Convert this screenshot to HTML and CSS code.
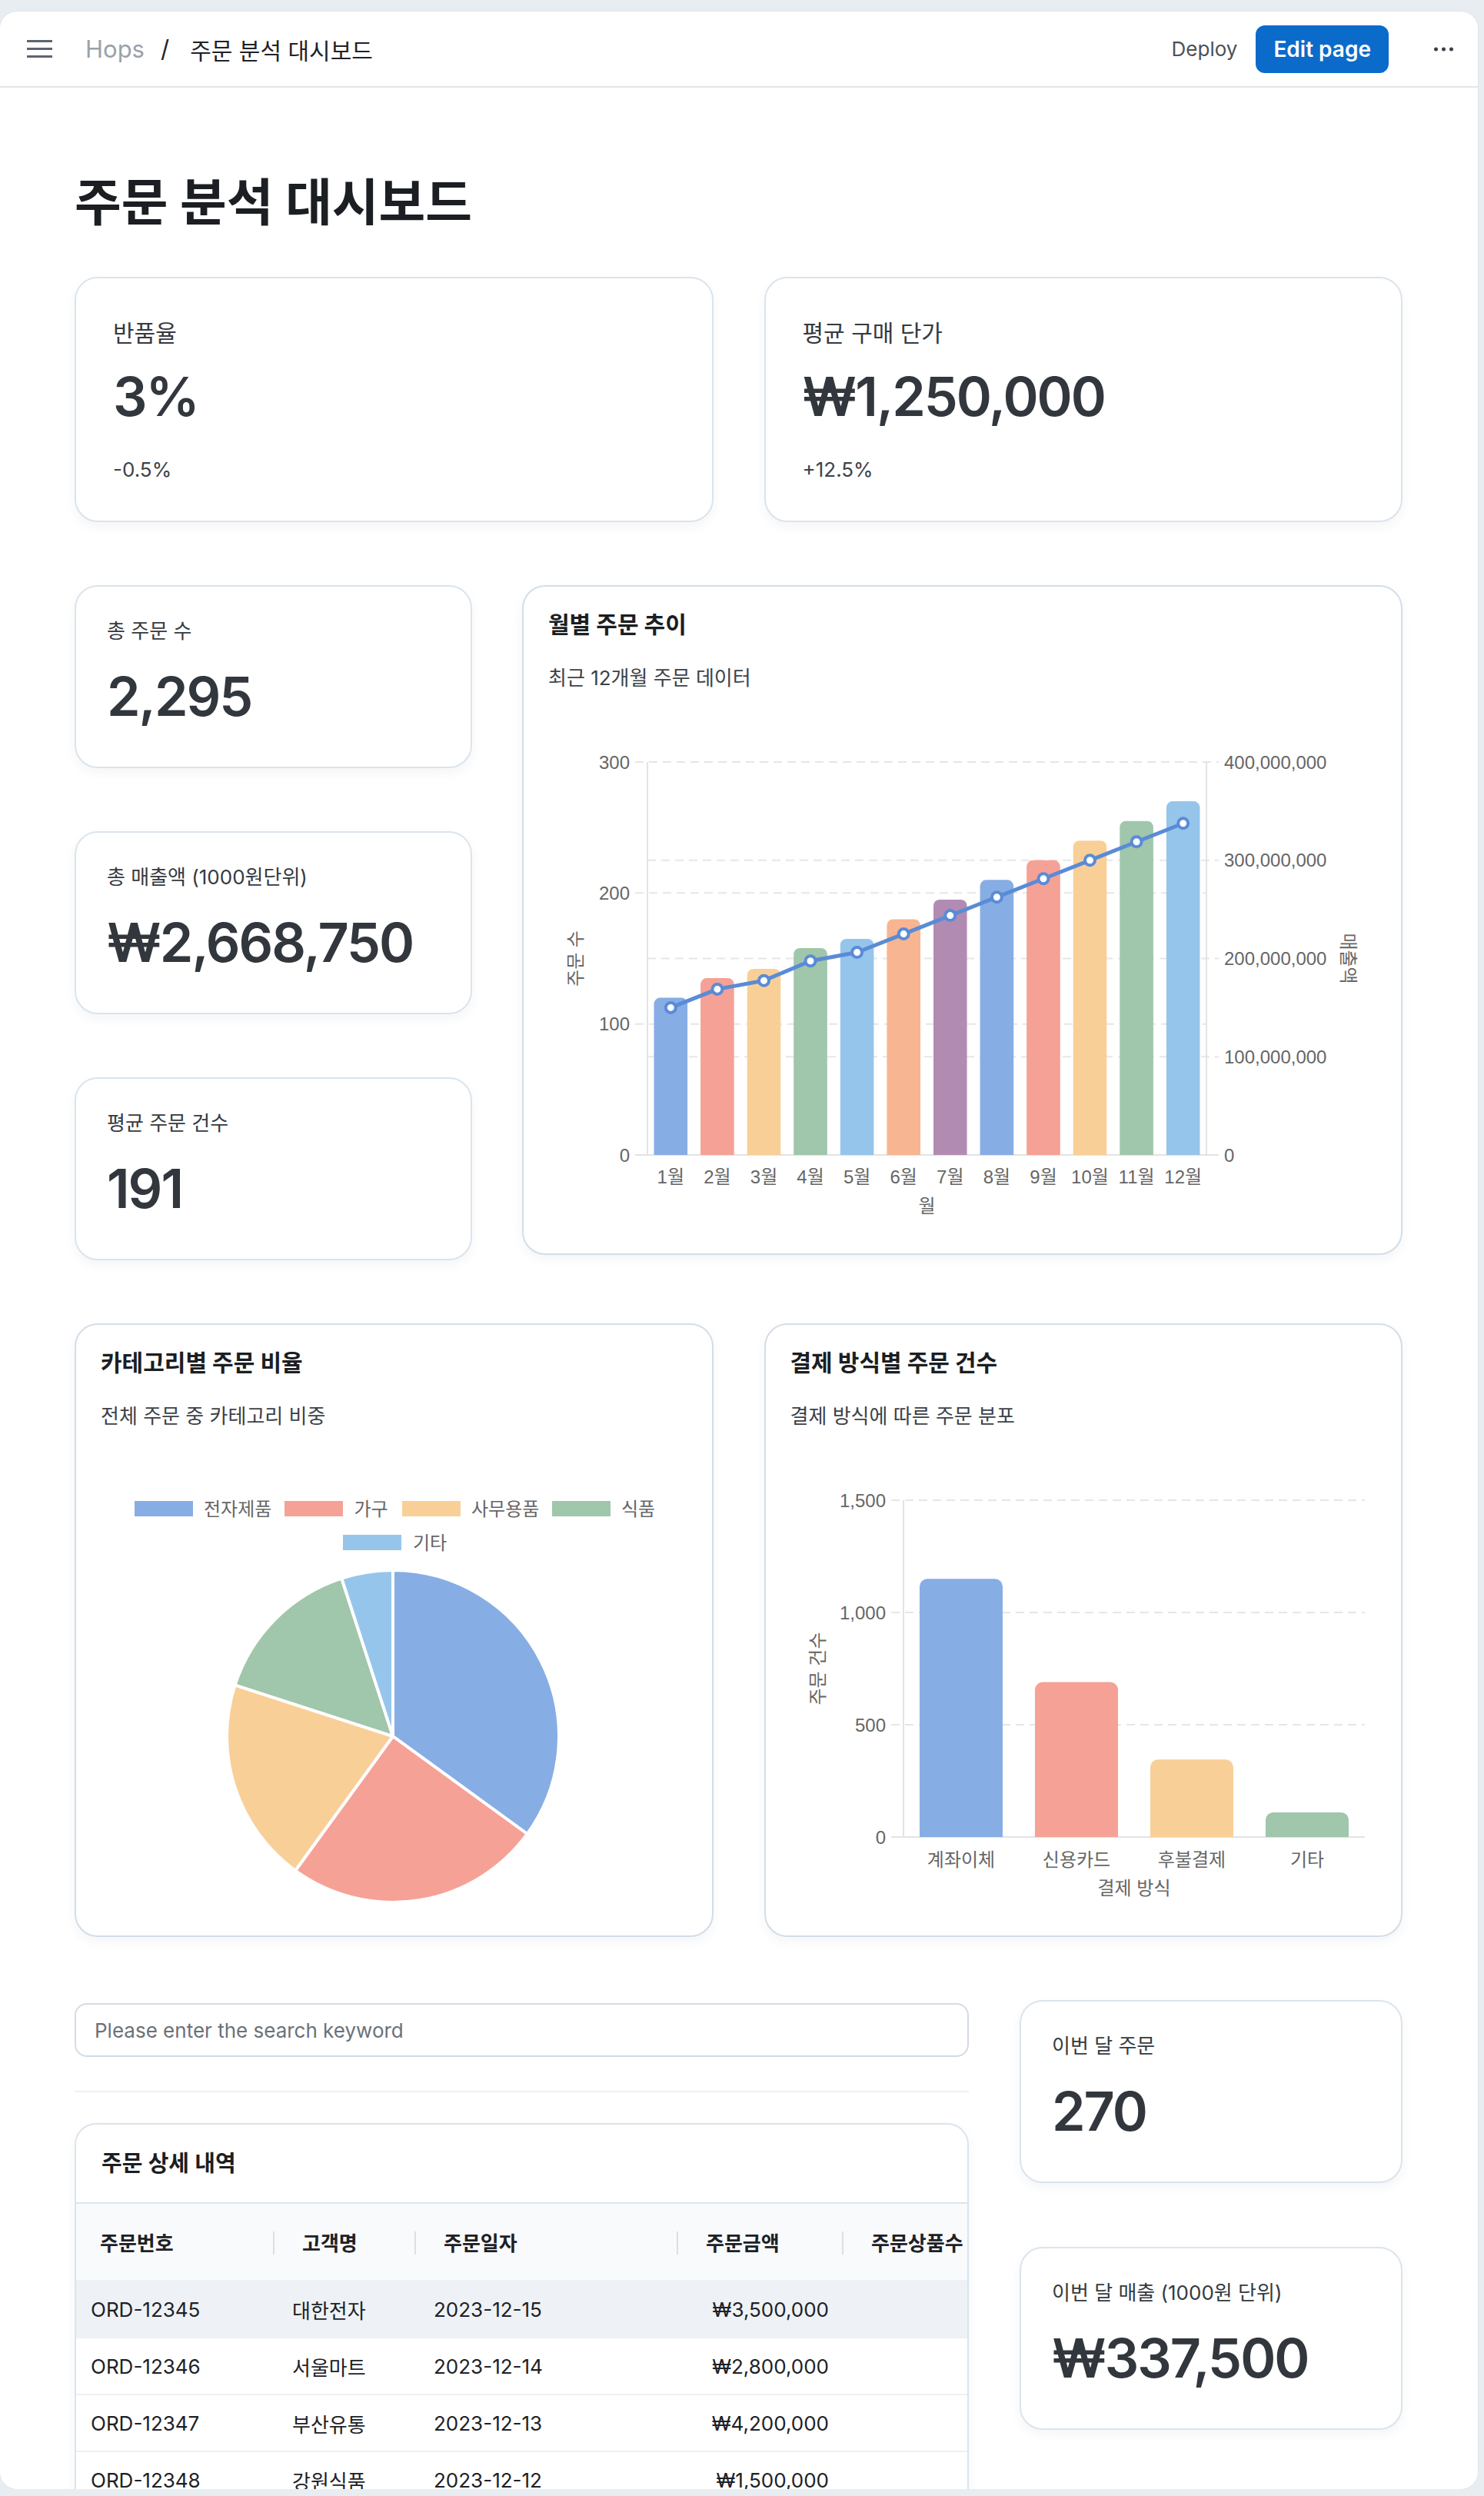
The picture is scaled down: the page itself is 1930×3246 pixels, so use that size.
FILE: index.html
```html
<!DOCTYPE html>
<html lang="ko">
<head>
<meta charset="utf-8">
<title>주문 분석 대시보드</title>
<link rel="stylesheet" href="styles.css">
</head>
<body>
<div class="frame">
  <header class="topbar">
    <div class="crumbs">
      <svg class="menu-icon" viewBox="0 0 33 24" width="33" height="24"><path d="M0 1.5H33M0 11.5H33M0 21.5H33" stroke="#5e656d" stroke-width="3" fill="none"/></svg>
      <span class="crumb-root">Hops</span>
      <span class="crumb-sep">/</span>
      <span class="crumb-page">주문 분석 대시보드</span>
    </div>
    <div class="actions">
      <span class="deploy">Deploy</span>
      <button class="edit-btn" type="button">Edit page</button>
      <svg class="more" viewBox="0 0 25 6" width="25" height="6"><circle cx="2.5" cy="3" r="2.5"/><circle cx="12.5" cy="3" r="2.5"/><circle cx="22.5" cy="3" r="2.5"/></svg>
    </div>
  </header>

  <main class="content">
    <h1 class="page-title">주문 분석 대시보드</h1>

    <div class="stack">
      <section class="row-kpi">
        <div class="card kpi kpi-lg">
          <div class="kpi-label">반품율</div>
          <div class="kpi-value">3%</div>
          <div class="kpi-delta">-0.5%</div>
        </div>
        <div class="card kpi kpi-lg">
          <div class="kpi-label">평균 구매 단가</div>
          <div class="kpi-value">₩1,250,000</div>
          <div class="kpi-delta">+12.5%</div>
        </div>
      </section>

      <section class="row-trend">
        <div class="kpi-col">
          <div class="card kpi kpi-sm">
            <div class="kpi-label">총 주문 수</div>
            <div class="kpi-value">2,295</div>
          </div>
          <div class="card kpi kpi-sm">
            <div class="kpi-label">총 매출액 (1000원단위)</div>
            <div class="kpi-value">₩2,668,750</div>
          </div>
          <div class="card kpi kpi-sm">
            <div class="kpi-label">평균 주문 건수</div>
            <div class="kpi-value">191</div>
          </div>
        </div>

        <div class="card chart-card">
          <div class="chart-title">월별 주문 추이</div>
          <div class="chart-sub">최근 12개월 주문 데이터</div>
          <svg class="chart" viewBox="0 0 1077 698" width="1077" height="698">
            <g class="grid">
              <line x1="113" y1="91" x2="872" y2="91"/>
              <line x1="113" y1="261.3" x2="856" y2="261.3"/>
              <line x1="113" y1="431.7" x2="856" y2="431.7"/>
              <line x1="129" y1="218.75" x2="872" y2="218.75"/>
              <line x1="129" y1="346.5" x2="872" y2="346.5"/>
              <line x1="129" y1="474.25" x2="872" y2="474.25"/>
            </g>
            <g class="axis">
              <line x1="113" y1="602" x2="872" y2="602"/>
              <line x1="129" y1="91" x2="129" y2="602"/>
              <line x1="856" y1="91" x2="856" y2="602"/>
            </g>
            <g>
              <path class="c-blue" d="M137.5 602V405.6A8 8 0 0 1 145.5 397.6H173.1A8 8 0 0 1 181.1 405.6V602Z"/>
              <path class="c-salmon" d="M198.1 602V380.1A8 8 0 0 1 206.1 372.1H233.7A8 8 0 0 1 241.7 380.1V602Z"/>
              <path class="c-peach" d="M258.7 602V368.1A8 8 0 0 1 266.7 360.1H294.3A8 8 0 0 1 302.3 368.1V602Z"/>
              <path class="c-green" d="M319.2 602V340.9A8 8 0 0 1 327.2 332.9H354.8A8 8 0 0 1 362.8 340.9V602Z"/>
              <path class="c-sky" d="M379.8 602V329A8 8 0 0 1 387.8 321H415.4A8 8 0 0 1 423.4 329V602Z"/>
              <path class="c-orange" d="M440.4 602V303.4A8 8 0 0 1 448.4 295.4H476A8 8 0 0 1 484 303.4V602Z"/>
              <path class="c-purple" d="M501 602V277.9A8 8 0 0 1 509 269.9H536.6A8 8 0 0 1 544.6 277.9V602Z"/>
              <path class="c-blue" d="M561.6 602V252.3A8 8 0 0 1 569.6 244.3H597.2A8 8 0 0 1 605.2 252.3V602Z"/>
              <path class="c-salmon" d="M622.2 602V226.8A8 8 0 0 1 630.2 218.8H657.8A8 8 0 0 1 665.8 226.8V602Z"/>
              <path class="c-peach" d="M682.7 602V201.2A8 8 0 0 1 690.7 193.2H718.3A8 8 0 0 1 726.3 201.2V602Z"/>
              <path class="c-green" d="M743.3 602V175.7A8 8 0 0 1 751.3 167.7H778.9A8 8 0 0 1 786.9 175.7V602Z"/>
              <path class="c-sky" d="M803.9 602V150.1A8 8 0 0 1 811.9 142.1H839.5A8 8 0 0 1 847.5 150.1V602Z"/>
            </g>
            <polyline class="trend-line" points="159.3,410.4 219.9,386.4 280.5,375.2 341,349.7 401.6,338.5 462.2,314.6 522.8,290.6 583.4,266.7 644,242.7 704.5,218.8 765.1,194.8 825.7,170.8"/>
            <g class="trend-pts">
              <circle cx="159.3" cy="410.4" r="6.5"/><circle cx="219.9" cy="386.4" r="6.5"/><circle cx="280.5" cy="375.2" r="6.5"/><circle cx="341" cy="349.7" r="6.5"/><circle cx="401.6" cy="338.5" r="6.5"/><circle cx="462.2" cy="314.6" r="6.5"/><circle cx="522.8" cy="290.6" r="6.5"/><circle cx="583.4" cy="266.7" r="6.5"/><circle cx="644" cy="242.7" r="6.5"/><circle cx="704.5" cy="218.8" r="6.5"/><circle cx="765.1" cy="194.8" r="6.5"/><circle cx="825.7" cy="170.8" r="6.5"/>
            </g>
            <g class="ax-text" text-anchor="end">
              <text x="106" y="99.5">300</text>
              <text x="106" y="269.8">200</text>
              <text x="106" y="440.2">100</text>
              <text x="106" y="610.5">0</text>
            </g>
            <g class="ax-text">
              <text x="879" y="99.5">400,000,000</text>
              <text x="879" y="227.25">300,000,000</text>
              <text x="879" y="355">200,000,000</text>
              <text x="879" y="482.75">100,000,000</text>
              <text x="879" y="610.5">0</text>
            </g>
            <g class="ax-text" text-anchor="middle">
              <text x="159.3" y="638.5">1월</text>
              <text x="219.9" y="638.5">2월</text>
              <text x="280.5" y="638.5">3월</text>
              <text x="341" y="638.5">4월</text>
              <text x="401.6" y="638.5">5월</text>
              <text x="462.2" y="638.5">6월</text>
              <text x="522.8" y="638.5">7월</text>
              <text x="583.4" y="638.5">8월</text>
              <text x="644" y="638.5">9월</text>
              <text x="704.5" y="638.5">10월</text>
              <text x="765.1" y="638.5">11월</text>
              <text x="825.7" y="638.5">12월</text>
              <text x="492.5" y="676.5">월</text>
              <text transform="translate(35 346.5) rotate(-90)" dy="8.5">주문 수</text>
              <text transform="translate(1040 346.5) rotate(90)" dy="8.5">매출액</text>
            </g>
          </svg>
        </div>
      </section>

      <section class="row-charts">
        <div class="card chart-card">
          <div class="chart-title">카테고리별 주문 비율</div>
          <div class="chart-sub">전체 주문 중 카테고리 비중</div>
          <svg class="chart" viewBox="0 0 762 625" width="762" height="625">
            <g class="legend">
              <rect class="c-blue" x="44" y="92" width="76" height="20"/><text x="134" y="111">전자제품</text>
              <rect class="c-salmon" x="239" y="92" width="76" height="20"/><text x="329.5" y="111">가구</text>
              <rect class="c-peach" x="392" y="92" width="76" height="20"/><text x="482" y="111">사무용품</text>
              <rect class="c-green" x="587" y="92" width="76" height="20"/><text x="677" y="111">식품</text>
              <rect class="c-sky" x="315" y="136" width="76" height="20"/><text x="406" y="155">기타</text>
            </g>
            <g class="pie">
              <path class="c-blue" d="M380 398L380 182A216 216 0 0 1 554.7 525Z"/>
              <path class="c-salmon" d="M380 398L554.7 525A216 216 0 0 1 253 572.7Z"/>
              <path class="c-peach" d="M380 398L253 572.7A216 216 0 0 1 174.6 331.3Z"/>
              <path class="c-green" d="M380 398L174.6 331.3A216 216 0 0 1 313.3 192.6Z"/>
              <path class="c-sky" d="M380 398L313.3 192.6A216 216 0 0 1 380 182Z"/>
            </g>
          </svg>
        </div>

        <div class="card chart-card">
          <div class="chart-title">결제 방식별 주문 건수</div>
          <div class="chart-sub">결제 방식에 따른 주문 분포</div>
          <svg class="chart" viewBox="0 0 762 625" width="762" height="625">
            <g class="grid">
              <line x1="131" y1="91" x2="747" y2="91"/>
              <line x1="131" y1="237" x2="747" y2="237"/>
              <line x1="131" y1="383" x2="747" y2="383"/>
            </g>
            <g class="axis">
              <line x1="131" y1="529" x2="747" y2="529"/>
              <line x1="147" y1="91" x2="147" y2="529"/>
            </g>
            <path class="c-blue" d="M168 529V203.2A10 10 0 0 1 178 193.2H266A10 10 0 0 1 276 203.2V529Z"/>
            <path class="c-salmon" d="M318 529V337.5A10 10 0 0 1 328 327.5H416A10 10 0 0 1 426 337.5V529Z"/>
            <path class="c-peach" d="M468 529V438.3A10 10 0 0 1 478 428.3H566A10 10 0 0 1 576 438.3V529Z"/>
            <path class="c-green" d="M618 529V506.9A10 10 0 0 1 628 496.9H716A10 10 0 0 1 726 506.9V529Z"/>
            <g class="ax-text" text-anchor="end">
              <text x="124" y="99.5">1,500</text>
              <text x="124" y="245.5">1,000</text>
              <text x="124" y="391.5">500</text>
              <text x="124" y="537.5">0</text>
            </g>
            <g class="ax-text" text-anchor="middle">
              <text x="222" y="566.5">계좌이체</text>
              <text x="372" y="566.5">신용카드</text>
              <text x="522" y="566.5">후불결제</text>
              <text x="672" y="566.5">기타</text>
              <text x="447" y="603.5">결제 방식</text>
              <text transform="translate(35 310) rotate(-90)" dy="8.5">주문 건수</text>
            </g>
          </svg>
        </div>
      </section>

      <section class="row-orders">
        <div class="orders-col">
          <input class="search" type="text" placeholder="Please enter the search keyword">
          <div class="divider"></div>
          <div class="card table-card">
            <div class="table-head">주문 상세 내역</div>
            <div class="table-scroll">
              <table class="orders">
                <colgroup><col class="w1"><col class="w2"><col class="w3"><col class="w4"><col class="w5"></colgroup>
                <thead>
                  <tr><th>주문번호</th><th>고객명</th><th>주문일자</th><th>주문금액</th><th>주문상품수</th></tr>
                </thead>
                <tbody>
                  <tr class="active"><td>ORD-12345</td><td>대한전자</td><td>2023-12-15</td><td class="num">₩3,500,000</td><td></td></tr>
                  <tr><td>ORD-12346</td><td>서울마트</td><td>2023-12-14</td><td class="num">₩2,800,000</td><td></td></tr>
                  <tr><td>ORD-12347</td><td>부산유통</td><td>2023-12-13</td><td class="num">₩4,200,000</td><td></td></tr>
                  <tr><td>ORD-12348</td><td>강원식품</td><td>2023-12-12</td><td class="num">₩1,500,000</td><td></td></tr>
                </tbody>
              </table>
            </div>
          </div>
        </div>
        <div class="kpi-col kpi-col-right">
          <div class="card kpi kpi-sm">
            <div class="kpi-label">이번 달 주문</div>
            <div class="kpi-value">270</div>
          </div>
          <div class="card kpi kpi-sm">
            <div class="kpi-label">이번 달 매출 (1000원 단위)</div>
            <div class="kpi-value">₩337,500</div>
          </div>
        </div>
      </section>
    </div>
  </main>
</div>
</body>
</html>
```
FILE: styles.css
```css
* { box-sizing: border-box; }

body {
  margin: 0;
  background: #e8edf2;
  font-family: Inter, "Noto Sans CJK KR", sans-serif;
  color: #1d2126;
}

.frame {
  margin: 15px 8px 0 0;
  height: 3222px;
  background: #ffffff;
  border-radius: 22px;
  overflow: hidden;
  box-shadow: 0 0 0 1px #dfe5ec;
}

/* top bar */
.topbar {
  height: 99px;
  border-bottom: 2px solid #e1e6eb;
  display: flex;
  align-items: center;
  justify-content: space-between;
  padding: 0 32px 0 35px;
}
.crumbs { display: flex; align-items: center; font-size: 30px; }
.menu-icon { display: block; margin-right: 43px; }
.crumb-root { color: #9aa1a9; font-size: 31px; }
.crumb-sep { margin: 0 27px 0 21px; color: #1f2328; font-size: 31px; }
.crumb-page { color: #1f2328; }

.actions { display: flex; align-items: center; }
.deploy { font-size: 26px; color: #4b5158; margin-right: 24px; }
.edit-btn {
  height: 62px;
  padding: 0 23px;
  border: 0;
  border-radius: 12px;
  background: #0b6bcb;
  color: #ffffff;
  font-family: Inter, sans-serif;
  font-size: 28px;
  font-weight: 600;
}
.more { display: block; margin-left: 59px; fill: #3b4047; }

/* content */
.content { padding: 0 98px 0 97px; }
.page-title {
  margin: 108px 0 56px;
  font-size: 66px;
  line-height: 82px;
  font-weight: 700;
  color: #1b1e22;
}
.stack { display: flex; flex-direction: column; gap: 82px; }

.card {
  background: #ffffff;
  border: 2px solid #dbe4ec;
  border-radius: 30px;
  box-shadow: 0 6px 14px rgba(40, 60, 90, 0.05);
}

.row-kpi { display: grid; grid-template-columns: 1fr 1fr; gap: 66px; }
.kpi-lg { height: 319px; padding: 51px 48px 0; }
.kpi-sm { height: 238px; padding: 40px 40px 0; }
.kpi-label { font-size: 26px; line-height: 36px; color: #343a40; }
.kpi-lg .kpi-label { font-size: 30px; line-height: 40px; }
.kpi-value {
  margin-top: 24px;
  font-size: 70px;
  line-height: 86px;
  font-weight: 600;
  letter-spacing: -2px;
  color: #32373d;
}
.kpi-lg .kpi-value { margin-top: 20px; }
.kpi-delta { margin-top: 32px; font-size: 26px; line-height: 40px; color: #3c4248; }

.row-trend {
  display: grid;
  grid-template-columns: 517px 1fr;
  gap: 65px;
  align-items: start;
}
.kpi-col { display: flex; flex-direction: column; gap: 82px; }
.kpi-col-right { gap: 83px; }

.chart-card { border-color: #d3dde8; padding: 29px 32px 32px; }
.chart-title { font-size: 30px; line-height: 40px; font-weight: 700; color: #1b1e22; }
.chart-sub { margin-top: 32px; font-size: 26px; line-height: 36px; color: #3c4248; }
.chart { display: block; }

.grid line { stroke: #e6e6e6; stroke-width: 2; stroke-dasharray: 11 7; }
.axis line { stroke: #e3e3e3; stroke-width: 2; }
.ax-text, .legend text {
  font-family: "Liberation Sans", "Noto Sans CJK KR", sans-serif;
  font-size: 24px;
  fill: #666666;
}
.trend-line { fill: none; stroke: #5a8bd6; stroke-width: 5; stroke-linejoin: round; }
.trend-pts circle { fill: #ffffff; stroke: #5a8bd6; stroke-width: 4; }
.pie path { stroke: #ffffff; stroke-width: 4; stroke-linejoin: round; }

.c-blue { fill: #87ade5; }
.c-salmon { fill: #f6a196; }
.c-peach { fill: #f9cf98; }
.c-green { fill: #a0c6ab; }
.c-sky { fill: #96c5ec; }
.c-orange { fill: #f8b591; }
.c-purple { fill: #b28bb3; }

.row-charts { display: grid; grid-template-columns: 1fr 1fr; gap: 66px; }

/* orders */
.row-orders {
  display: grid;
  grid-template-columns: 1163px 1fr;
  gap: 66px;
  align-items: start;
}
.search {
  display: block;
  width: 100%;
  margin-top: 4px;
  height: 70px;
  border: 2px solid #d3dbe4;
  border-radius: 16px;
  padding: 0 24px;
  font-family: Inter, "Noto Sans CJK KR", sans-serif;
  font-size: 26px;
  color: #1d2126;
  background: #ffffff;
}
.search::placeholder { color: #6b7178; }
.divider { height: 2px; background: #eef1f4; margin: 44px 0 40px; }

.table-card { border-radius: 28px; overflow: hidden; height: 560px; }
.table-head {
  padding: 30px 33px 30px;
  border-bottom: 2px solid #dde4eb;
  font-size: 29px;
  line-height: 41px;
  font-weight: 600;
  color: #1b1e22;
}
.table-scroll { overflow: hidden; }
.orders {
  border-collapse: collapse;
  table-layout: fixed;
  width: 1400px;
  font-size: 26px;
}
.w1 { width: 256px; }
.w2 { width: 184px; }
.w3 { width: 341px; }
.w4 { width: 215px; }
.w5 { width: 404px; }
.orders th {
  position: relative;
  height: 100px;
  padding: 0 0 0 38px;
  background: #f8fafc;
  text-align: left;
  font-weight: 600;
  color: #1d2126;
  white-space: nowrap;
}
.orders th:first-child { padding-left: 31px; }
.orders th + th::before {
  content: "";
  position: absolute;
  left: 0;
  top: 36px;
  width: 2px;
  height: 30px;
  background: #d9e0e7;
}
.orders td {
  height: 74px;
  padding: 0 25px;
  border-top: 2px solid #edf0f3;
  color: #1d2126;
  white-space: nowrap;
}
.orders td:first-child { padding-left: 19px; }
.orders td.num { text-align: right; padding-right: 17px; }
.orders tr.active td { background: #eef2f6; }
```
